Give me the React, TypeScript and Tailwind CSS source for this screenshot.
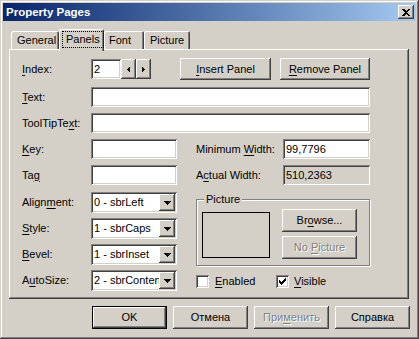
import React from "react";

const raised =
  "shadow-[inset_-1px_-1px_0_#404040,inset_1px_1px_0_#ffffff,inset_-2px_-2px_0_#808080,inset_2px_2px_0_#d4d0c8]";
const sunken =
  "shadow-[inset_1px_1px_0_#808080,inset_-1px_-1px_0_#ffffff,inset_2px_2px_0_#404040,inset_-2px_-2px_0_#d4d0c8]";

function U({ children }: { children: React.ReactNode }) {
  return <span className="underline underline-offset-[2px]">{children}</span>;
}

function Input({ w, value, disabled }: { w: string; value?: string; disabled?: boolean }) {
  return (
    <div
      className={`${w} h-[20px] flex items-center px-[3px] whitespace-nowrap overflow-hidden ${
        disabled ? "bg-[#d4d0c8]" : "bg-white"
      } ${sunken}`}
    >
      {value}
    </div>
  );
}

function Button({ w, h = "h-[23px]", disabled, children }: { w: string; h?: string; disabled?: boolean; children: React.ReactNode }) {
  return (
    <div
      className={`${w} ${h} flex items-center justify-center bg-[#d4d0c8] ${raised} ${
        disabled ? "text-[#808080] [text-shadow:1px_1px_0_#ffffff]" : ""
      }`}
    >
      {children}
    </div>
  );
}

function Combo({ value }: { value: string }) {
  return (
    <div className={`w-[86px] h-[21px] bg-white flex p-[2px] ${sunken}`}>
      <span className="flex-1 overflow-hidden whitespace-nowrap pl-[1px] leading-[17px]">{value}</span>
      <div className={`w-[16px] flex items-center justify-center bg-[#d4d0c8] ${raised}`}>
        <svg width="7" height="4" viewBox="0 0 7 4" shapeRendering="crispEdges">
          <path d="M0 0h7v1h-1v1h-1v1h-1v1h-1v-1h-1v-1h-1v-1h-1z" fill="#000" />
        </svg>
      </div>
    </div>
  );
}

function Row({ label, children, className = "" }: { label: React.ReactNode; children: React.ReactNode; className?: string }) {
  return (
    <div className={`flex items-center ${className}`}>
      <span className="w-[69px] shrink-0">{label}</span>
      {children}
    </div>
  );
}

function Check({ checked }: { checked?: boolean }) {
  return (
    <div className={`w-[13px] h-[13px] bg-white flex items-center justify-center ${sunken}`}>
      {checked && (
        <svg width="7" height="7" viewBox="0 0 7 7" shapeRendering="crispEdges">
          <path
            d="M6 0h1v3h-1v1h-1v1h-1v1h-1v1h-1v-1h-1v-1h-1v-3h1v1h1v1h1v-1h1v-1h1z"
            fill="#000"
          />
        </svg>
      )}
    </div>
  );
}

export default function App() {
  return (
    <div className="w-[419px] h-[339px] bg-[#d4d0c8] p-[3px] font-['Liberation_Sans',Arial,sans-serif] text-[11px] leading-[13px] text-black select-none shadow-[inset_-1px_-1px_0_#404040,inset_1px_1px_0_#d4d0c8,inset_-2px_-2px_0_#808080,inset_2px_2px_0_#ffffff]">
      {/* Title bar */}
      <div className="h-[18px] flex items-center bg-linear-to-r from-[#0a246a] to-[#a6caf0] pl-[3px] pr-[2px]">
        <span className="flex-1 text-white font-bold text-[11.5px]">Property Pages</span>
        <div className={`w-[16px] h-[14px] bg-[#d4d0c8] flex items-center justify-center ${raised}`}>
          <svg width="8" height="7" viewBox="0 0 8 7" shapeRendering="crispEdges">
            <path d="M0 0h2l2 2 2-2h2l-3 3.5 3 3.5h-2l-2-2-2 2h-2l3-3.5z" fill="#000" />
          </svg>
        </div>
      </div>

      {/* Tabs */}
      <div className="flex items-end mt-[8px] ml-[8px] relative z-10">
        <div className="w-[48px] h-[18px] flex items-center pl-[6px] rounded-tl-[2px] rounded-tr-[2px] shadow-[inset_1px_1px_0_#ffffff,inset_-1px_0_0_#404040,inset_-2px_0_0_#808080]">
          General
        </div>
        <div className="w-[45px] h-[22px] -mb-[2px] flex items-start pt-[2px] pl-[3px] bg-[#d4d0c8] rounded-tl-[2px] rounded-tr-[2px] shadow-[inset_1px_1px_0_#ffffff,inset_-1px_0_0_#404040,inset_-2px_0_0_#808080]">
          <span className="border border-dotted border-black px-[3px] h-[17px] flex items-center">Panels</span>
        </div>
        <div className="w-[40px] h-[18px] flex items-center pl-[5px] rounded-tl-[2px] rounded-tr-[2px] shadow-[inset_1px_1px_0_#ffffff,inset_-1px_0_0_#404040,inset_-2px_0_0_#808080]">
          Font
        </div>
        <div className="w-[46px] h-[18px] flex items-center pl-[6px] rounded-tl-[2px] rounded-tr-[2px] shadow-[inset_1px_1px_0_#ffffff,inset_-1px_0_0_#404040,inset_-2px_0_0_#808080]">
          Picture
        </div>
      </div>

      {/* Panel */}
      <div className="ml-[6px] w-[400px] h-[250px] pl-[13px] pt-[9px] shadow-[inset_-1px_-1px_0_#404040,inset_1px_1px_0_#ffffff,inset_-2px_-2px_0_#808080]">
        <div className="flex items-center h-[22px]">
          <span className="w-[69px] shrink-0">
            <U>I</U>ndex:
          </span>
          <Input w="w-[30px]" value="2" />
          <div className={`w-[15px] h-[20px] flex items-center justify-center bg-[#d4d0c8] ${raised}`}>
            <svg width="3" height="5" viewBox="0 0 3 5" shapeRendering="crispEdges">
              <path d="M2 0h1v5h-1v-1h-1v-1h-1v-1h1v-1h1z" fill="#000" />
            </svg>
          </div>
          <div className={`w-[15px] h-[20px] flex items-center justify-center bg-[#d4d0c8] ${raised}`}>
            <svg width="3" height="5" viewBox="0 0 3 5" shapeRendering="crispEdges">
              <path d="M0 0h1v1h1v1h1v1h-1v1h-1v1h-1z" fill="#000" />
            </svg>
          </div>
          <div className="ml-[29px]">
            <Button w="w-[91px]" h="h-[22px]">
              <span>
                <U>I</U>nsert Panel
              </span>
            </Button>
          </div>
          <div className="ml-[9px]">
            <Button w="w-[90px]" h="h-[22px]">
              <span>
                <U>R</U>emove Panel
              </span>
            </Button>
          </div>
        </div>

        <Row className="mt-[7px]" label={<><U>T</U>ext:</>}>
          <Input w="w-[279px]" />
        </Row>
        <Row className="mt-[6px]" label={<>ToolTipTe<U>x</U>t:</>}>
          <Input w="w-[279px]" />
        </Row>

        <div className="flex mt-[6px]">
          {/* Left column */}
          <div className="flex flex-col">
            <Row label={<><U>K</U>ey:</>}>
              <Input w="w-[86px]" />
            </Row>
            <Row className="mt-[6px]" label={<>Ta<U>g</U></>}>
              <Input w="w-[86px]" />
            </Row>
            <Row className="mt-[7px]" label={<>Align<U>m</U>ent:</>}>
              <Combo value="0 - sbrLeft" />
            </Row>
            <Row className="mt-[5px]" label={<><U>S</U>tyle:</>}>
              <Combo value="1 - sbrCaps" />
            </Row>
            <Row className="mt-[5px]" label={<><U>B</U>evel:</>}>
              <Combo value="1 - sbrInset" />
            </Row>
            <Row className="mt-[5px]" label={<>A<U>u</U>toSize:</>}>
              <Combo value="2 - sbrContents" />
            </Row>
          </div>

          {/* Right column */}
          <div className="flex flex-col ml-[19px]">
            <div className="flex items-center">
              <span className="w-[87px] shrink-0">
                Minimum <U>W</U>idth:
              </span>
              <Input w="w-[87px]" value="99,7796" />
            </div>
            <div className="flex items-center mt-[6px]">
              <span className="w-[87px] shrink-0">
                A<U>c</U>tual Width:
              </span>
              <Input w="w-[87px]" value="510,2363" disabled />
            </div>

            <div className="relative mt-[14px] w-[174px] h-[67px] border border-[#808080] shadow-[1px_1px_0_#ffffff,inset_1px_1px_0_#ffffff] flex pl-[5px] pt-[9px]">
              <span className="absolute -top-[7px] left-[7px] px-[2px] bg-[#d4d0c8]">Picture</span>
              <div className="mt-[3px] w-[68px] h-[46px] border border-black" />
              <div className="ml-[12px] flex flex-col gap-[4px]">
                <Button w="w-[75px]">
                  <span>
                    Br<U>o</U>wse...
                  </span>
                </Button>
                <Button w="w-[75px]" disabled>
                  <span>
                    No <U>P</U>icture
                  </span>
                </Button>
              </div>
            </div>

            <div className="flex items-center mt-[9px]">
              <Check />
              <span className="ml-[6px] w-[61px]">
                <U>E</U>nabled
              </span>
              <Check checked />
              <span className="ml-[5px]">
                <U>V</U>isible
              </span>
            </div>
          </div>
        </div>
      </div>

      {/* Bottom buttons */}
      <div className="flex gap-[6px] mt-[7px] ml-[89px]">
        <div className={`w-[75px] h-[23px] flex items-center justify-center border border-black bg-[#d4d0c8] ${raised}`}>
          OK
        </div>
        <Button w="w-[75px]">Отмена</Button>
        <Button w="w-[75px]" disabled>
          <span>
            При<U>м</U>енить
          </span>
        </Button>
        <Button w="w-[75px]">Справка</Button>
      </div>
    </div>
  );
}
